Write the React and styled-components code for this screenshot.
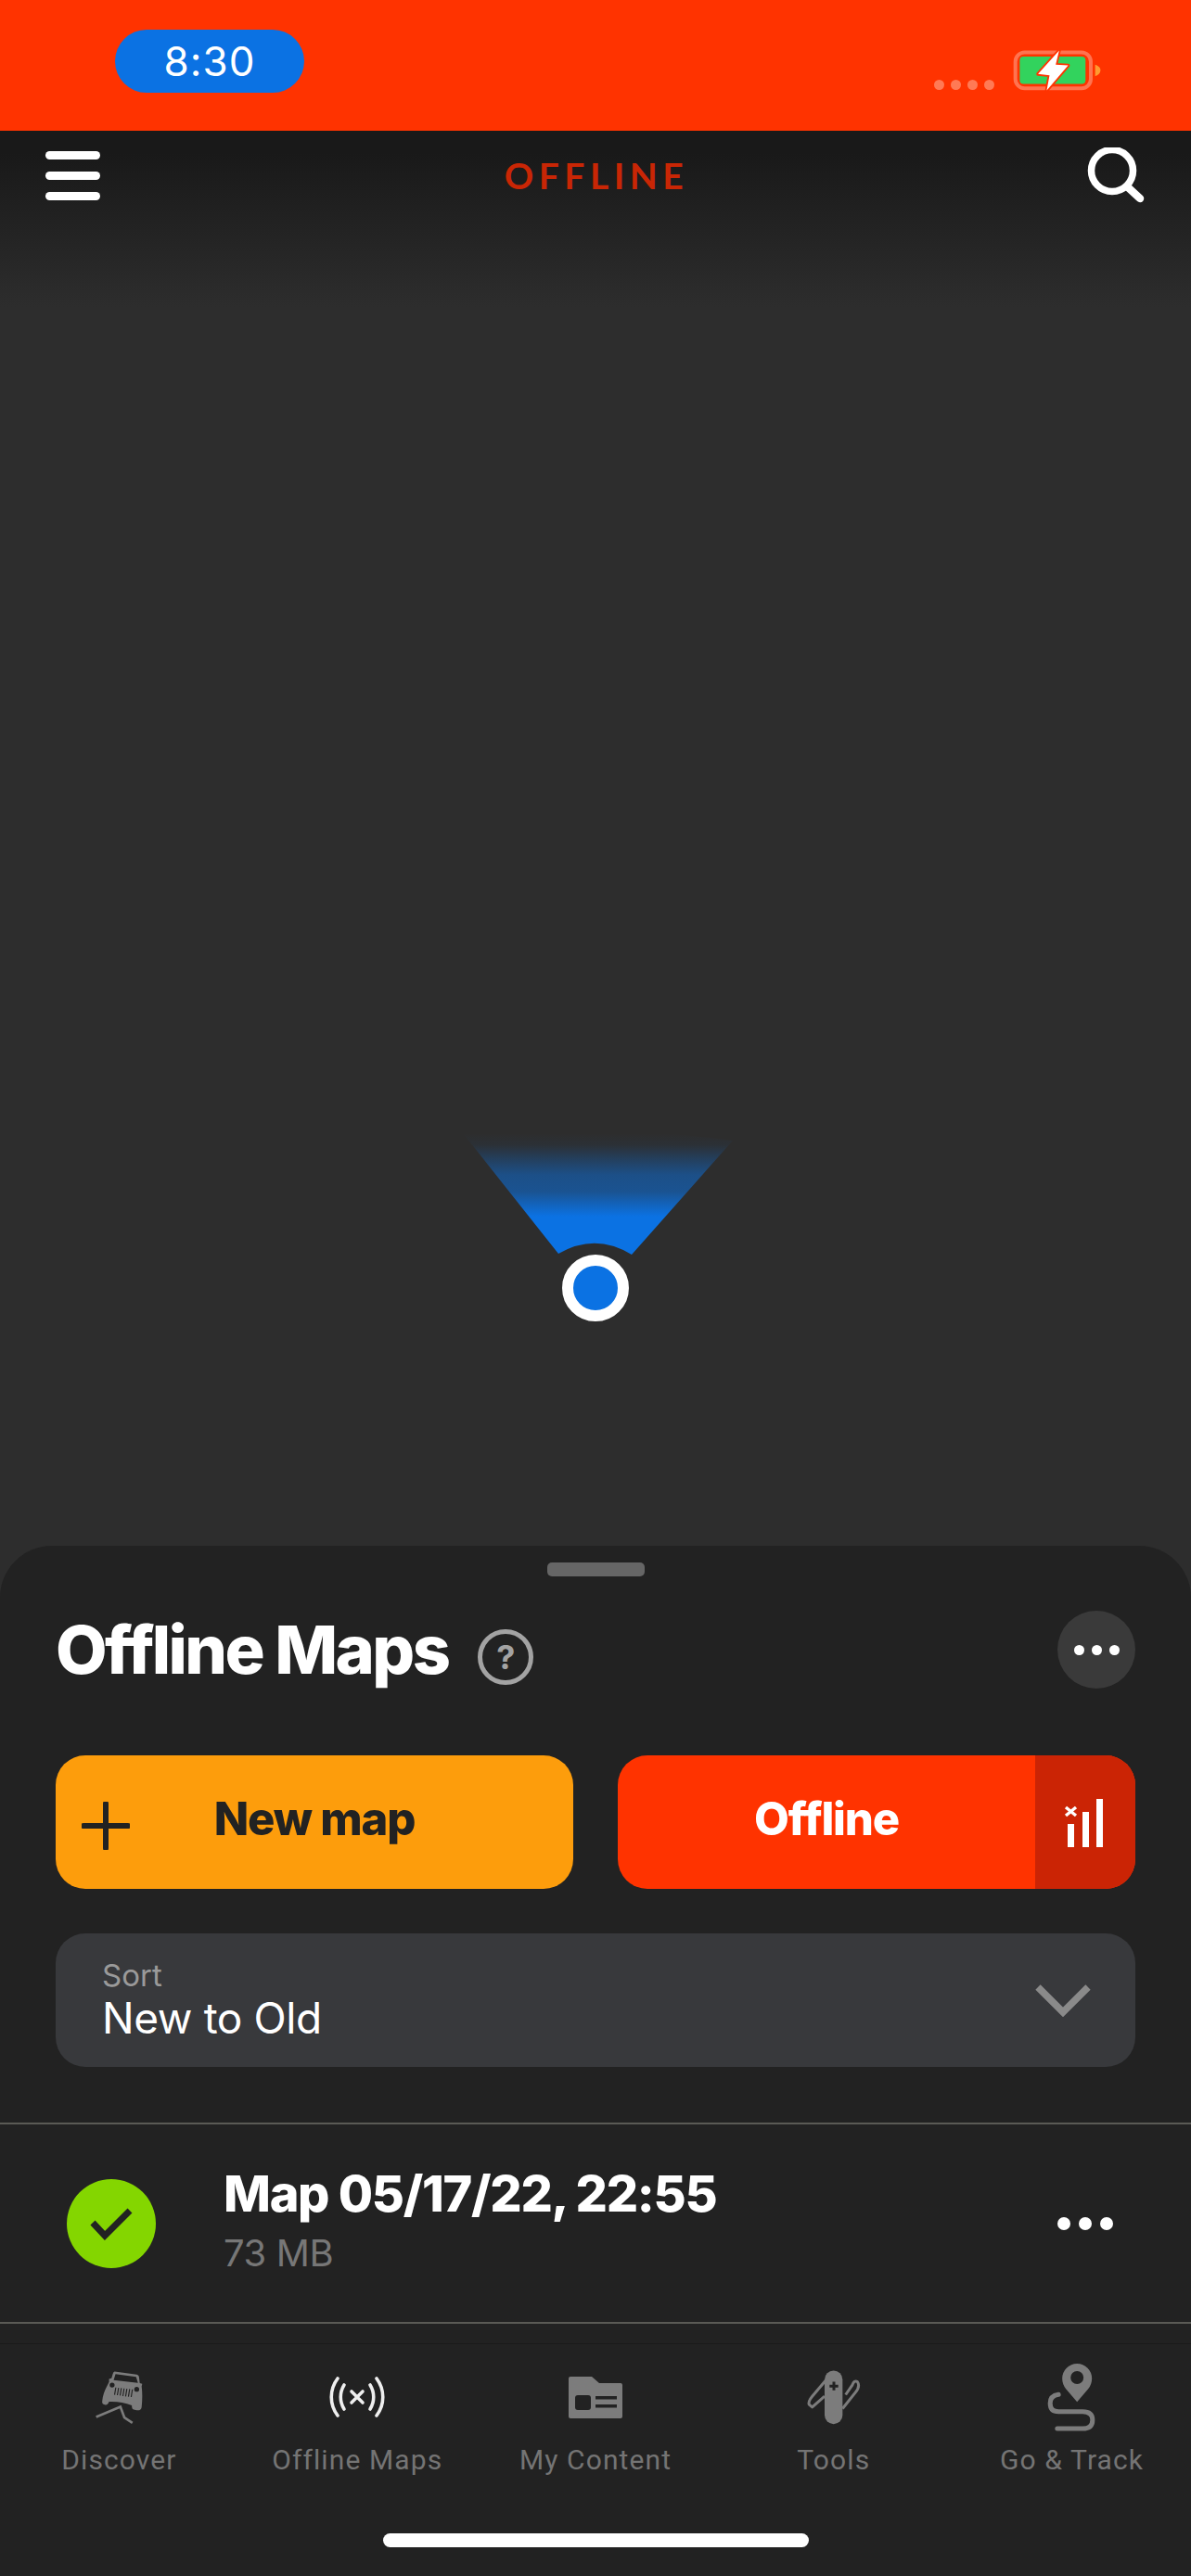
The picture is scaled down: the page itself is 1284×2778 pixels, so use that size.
import React from "react";
import styled, { createGlobalStyle } from "styled-components";

const Global = createGlobalStyle`
  html, body { margin: 0; padding: 0; background: #2d2d2d; }
  * { box-sizing: border-box; }
  body { font-family: Inter, Roboto, "Liberation Sans", sans-serif; }
`;

const Page = styled.div`
  width: 1284px;
  height: 2778px;
  display: flex;
  flex-direction: column;
  overflow: hidden;
  background: #2d2d2d;
`;

const StatusBar = styled.div`
  height: 141px;
  flex: none;
  background: #ff3300;
  display: flex;
  align-items: flex-start;
  justify-content: space-between;
  padding: 32px 96px 0 124px;
`;
const TimePill = styled.div`
  width: 204px;
  height: 68px;
  border-radius: 34px;
  background: #0b72e3;
  color: #fff;
  font: 400 44px/68px Inter, sans-serif;
  letter-spacing: 1px;
  text-align: center;
`;
const StatusRight = styled.div`
  display: flex;
  align-items: flex-end;
  gap: 19px;
  margin-top: 20px;
`;
const SignalDots = styled.div`
  display: flex;
  gap: 7px;
  margin-bottom: 2px;
`;
const SignalDot = styled.span`
  width: 11px;
  height: 11px;
  border-radius: 50%;
  background: #ff7a55;
`;

const MapArea = styled.div`
  position: relative;
  height: 1526px;
  flex: none;
  background: linear-gradient(#191919 0, #191919 24px, #2d2d2d 190px);
`;
const TopBar = styled.div`
  height: 96px;
  display: flex;
  align-items: center;
  justify-content: space-between;
  padding: 0 50px 0 49px;
`;
const Burger = styled.div`
  width: 59px;
  display: flex;
  flex-direction: column;
  gap: 13px;
`;
const BurgerBar = styled.span`
  height: 9px;
  border-radius: 5px;
  background: #fff;
`;
const ModeTitle = styled.div`
  font: 700 39px/1 Lato, sans-serif;
  letter-spacing: 5.5px;
  color: #c92605;
  margin-left: 6px;
`;
const Pin = styled.div`
  position: absolute;
  left: 499px;
  top: 1079px;
  width: 292px;
  height: 206px;
`;
const PinDot = styled.div`
  position: absolute;
  left: 107px;
  top: 133px;
  width: 72px;
  height: 72px;
  border-radius: 50%;
  background: #0b72e3;
  border: 12px solid #fff;
`;

const Sheet = styled.div`
  flex: 1;
  background: #222;
  border-radius: 56px 56px 0 0;
  display: flex;
  flex-direction: column;
`;
const Handle = styled.div`
  width: 105px;
  height: 15px;
  border-radius: 5px;
  background: #666;
  margin: 18px auto 0;
  flex: none;
`;
const Section = styled.div`
  padding: 0 60px;
`;
const TitleRow = styled(Section)`
  display: flex;
  align-items: center;
  margin-top: 37px;
  height: 84px;
`;
const Title = styled.h1`
  margin: 0;
  font: 800 72px/84px Inter, sans-serif;
  letter-spacing: -2.6px;
  color: #fff;
`;
const Help = styled.div`
  width: 60px;
  height: 60px;
  margin: 16px 0 0 32px;
  border-radius: 50%;
  border: 5px solid #a3a3a3;
  color: #a3a3a3;
  font: 700 36px/50px Inter, sans-serif;
  text-align: center;
`;
const MoreCircle = styled.div`
  width: 84px;
  height: 84px;
  margin-left: auto;
  border-radius: 50%;
  background: #3a3a3a;
  display: flex;
  align-items: center;
  justify-content: center;
  gap: 8px;
`;
const MoreDot = styled.span`
  width: ${(p) => p.$size}px;
  height: ${(p) => p.$size}px;
  border-radius: 50%;
  background: #fff;
`;
const ButtonRow = styled(Section)`
  display: grid;
  grid-template-columns: 558px 558px;
  justify-content: space-between;
  margin-top: 72px;
`;
const ActionButton = styled.div`
  height: 144px;
  border-radius: 32px;
  overflow: hidden;
  display: flex;
  align-items: stretch;
  background: ${(p) => p.$bg};
  color: ${(p) => p.$fg};
  font: 800 49px/1 Inter, sans-serif;
  letter-spacing: -1.2px;
`;
const PlusSlot = styled.div`
  width: 108px;
  flex: none;
  display: flex;
  align-items: center;
  justify-content: center;
  padding: 8px 0 0;
  margin-left: 0;
`;
const ButtonLabel = styled.div`
  flex: 1;
  display: flex;
  align-items: center;
  justify-content: center;
  padding: 0 ${(p) => p.$pad || 0}px 8px 0;
`;
const SignalSlot = styled.div`
  width: 108px;
  flex: none;
  background: #cb2405;
  display: flex;
  align-items: center;
  justify-content: center;
`;
const SortBox = styled.div`
  height: 144px;
  margin: 48px 60px 0;
  border-radius: 32px;
  background: #38393c;
  display: flex;
  align-items: center;
  justify-content: space-between;
  padding: 0 48px 0 50px;
`;
const SortText = styled.div`
  display: flex;
  flex-direction: column;
`;
const SortLabel = styled.div`
  font: 400 33px/38px Inter, sans-serif;
  color: #9a9a9a;
`;
const SortValue = styled.div`
  font: 400 46px/54px Inter, sans-serif;
  letter-spacing: -0.4px;
  color: #fff;
`;
const Divider = styled.div`
  height: 2px;
  flex: none;
  background: #5a5a55;
`;
const ListRow = styled.div`
  height: 213px;
  margin-top: ${(p) => p.$top || 0}px;
  display: flex;
  align-items: center;
  padding: 0 84px 0 72px;
`;
const StatusCircle = styled.div`
  width: 96px;
  height: 96px;
  flex: none;
  border-radius: 50%;
  background: #84d600;
  display: flex;
  align-items: center;
  justify-content: center;
`;
const RowText = styled.div`
  flex: 1;
  margin-left: 73px;
  padding-bottom: 4px;
`;
const RowTitle = styled.div`
  font: 800 54px/64px Inter, sans-serif;
  letter-spacing: -1.3px;
  color: #fff;
`;
const RowSub = styled.div`
  font: 400 40px/56px Inter, sans-serif;
  letter-spacing: -0.4px;
  color: #777;
  margin-top: 4px;
`;
const RowMore = styled.div`
  display: flex;
  gap: 9px;
`;
const TabArea = styled.div`
  flex: 1;
  display: flex;
  flex-direction: column;
  padding-top: 21px;
`;
const TabRule = styled.div`
  height: 1px;
  background: #1a1a1a;
`;
const Tabs = styled.div`
  display: grid;
  grid-template-columns: repeat(5, 1fr);
  padding-top: 21px;
`;
const Tab = styled.div`
  display: flex;
  flex-direction: column;
  align-items: center;
`;
const TabIcon = styled.div`
  height: 72px;
  display: flex;
  align-items: center;
  justify-content: center;
`;
const TabLabel = styled.div`
  margin-top: 12px;
  font: 400 30px/40px Roboto, sans-serif;
  letter-spacing: 1.1px;
  color: #747474;
  white-space: nowrap;
`;
const HomeBar = styled.div`
  width: 459px;
  height: 15px;
  border-radius: 8px;
  background: #fff;
  margin: 59px auto 0;
  flex: none;
`;

const GRAY = "#7c7c7c";
const DARK = "#222";

const BatteryIcon = () => (
  <svg width="97" height="47" viewBox="335 35 290 140">
    <rect x="346" y="48" width="243" height="116" rx="30" fill="none" stroke="#ff7350" strokeWidth="12" />
    <rect x="360" y="62" width="212" height="88" rx="12" fill="#32d35d" />
    <path d="M603 88 C615 92 622 100 620 108 C619 116 612 122 603 125 Z" fill="#ff9a30" />
    <path
      d="M487 42 L476 88 L516 90 L447 171 L456 122 L419 118 Z"
      fill="#fff"
      stroke="#ff3300"
      strokeWidth="11"
      strokeLinejoin="round"
      paintOrder="stroke"
    />
  </svg>
);

const SearchIcon = () => (
  <svg width="62" height="60" viewBox="0 0 62 60">
    <circle cx="27" cy="25" r="22.5" fill="none" stroke="#fff" strokeWidth="7.5" />
    <line x1="44" y1="43" x2="57" y2="55" stroke="#fff" strokeWidth="8.5" strokeLinecap="round" />
  </svg>
);

const ConeIcon = () => (
  <svg width="292" height="206" viewBox="499 1220 292 206">
    <defs>
      <linearGradient id="cone" gradientUnits="userSpaceOnUse" x1="0" y1="1222" x2="0" y2="1312">
        <stop offset="0" stopColor="#0b72e3" stopOpacity="0" />
        <stop offset="0.14" stopColor="#0b72e3" stopOpacity="0.05" />
        <stop offset="0.5" stopColor="#0b72e3" stopOpacity="0.5" />
        <stop offset="0.7" stopColor="#0b72e3" stopOpacity="0.55" />
        <stop offset="1" stopColor="#0b72e3" stopOpacity="1" />
      </linearGradient>
    </defs>
    <path d="M499 1222 Q640 1210 790 1230 L681 1353 Q642 1329 602 1352 Z" fill="url(#cone)" />
  </svg>
);

const PlusIcon = () => (
  <svg width="52" height="52" viewBox="0 0 52 52">
    <path d="M26 2 V50 M2 26 H50" stroke={DARK} strokeWidth="6" strokeLinecap="round" />
  </svg>
);

const SignalXIcon = () => (
  <svg width="46" height="54" viewBox="0 0 46 54">
    <rect x="4" y="29" width="7" height="25" fill="#fff" />
    <rect x="20" y="16" width="7" height="38" fill="#fff" />
    <rect x="35" y="2" width="7" height="52" fill="#fff" />
    <path d="M2 11 L13 20 M13 11 L2 20" stroke="#fff" strokeWidth="3.4" />
  </svg>
);

const ChevronIcon = () => (
  <svg width="60" height="36" viewBox="0 0 60 36">
    <path d="M3 4 L30 31 L57 4" fill="none" stroke="#8a8a8a" strokeWidth="7.5" />
  </svg>
);

const CheckIcon = () => (
  <svg width="48" height="36" viewBox="0 0 48 36">
    <path d="M4 17 L17 31 L44 4" fill="none" stroke={DARK} strokeWidth="7" />
  </svg>
);

const JeepIcon = () => (
  <svg width="53" height="60" viewBox="125 75 160 180">
    <path
      fill={GRAY}
      d="M190 82 L262 92 Q270 94 270 104 L272 120 L280 122 L278 130 Q282 160 278 198 Q276 210 262 208 L252 206 Q246 204 246 192 Q210 178 172 180 Q168 192 158 190 L152 188 Q148 186 150 176 Q152 154 166 128 L172 116 L172 106 L180 104 L184 90 Q186 82 190 82 Z"
    />
    <path fill={DARK} d="M193 90 L260 99 L266 119 L187 110 Z" />
    <circle cx="182" cy="126" r="8" fill={DARK} />
    <circle cx="262" cy="140" r="8" fill={DARK} />
    <path
      d="M194 134 L190 158 M203 135 L199 159 M212 136 L208 160 M221 137 L217 162 M230 138 L226 163 M239 139 L235 164 M248 140 L244 165"
      stroke={DARK}
      strokeWidth="3.5"
    />
    <path d="M130 230 L209 197 L222 232 L248 249" fill="none" stroke={GRAY} strokeWidth="8" />
  </svg>
);

const OfflineIcon = () => (
  <svg width="60" height="44" viewBox="0 0 60 44" fill="none" stroke="#efefef" strokeWidth="3.6" strokeLinecap="round">
    <path d="M9 2 C0 14 0 30 9 42" />
    <path d="M16 9 C11 17 11 27 16 35" />
    <path d="M51 2 C60 14 60 30 51 42" />
    <path d="M44 9 C49 17 49 27 44 35" />
    <path d="M24 16 L36 28 M36 16 L24 28" />
  </svg>
);

const FolderIcon = () => (
  <svg width="58" height="45" viewBox="0 0 58 45">
    <path
      fill={GRAY}
      d="M2 0 H25 L33 7 H56 Q58 7 58 9 V43 Q58 45 56 45 H2 Q0 45 0 43 V2 Q0 0 2 0 Z"
    />
    <rect x="7" y="20" width="17" height="16" rx="3" fill={DARK} />
    <rect x="29" y="21" width="23" height="3.5" fill={DARK} />
    <rect x="29" y="30" width="23" height="3.5" fill={DARK} />
  </svg>
);

const ToolsIcon = () => (
  <svg width="60" height="62" viewBox="140 75 180 185">
    <path
      d="M205 112 L160 165 Q146 182 150 192 L160 200 L200 165"
      fill="none"
      stroke={GRAY}
      strokeWidth="9"
      strokeLinejoin="round"
    />
    <path
      d="M258 205 L300 152 Q316 132 306 118 Q296 112 290 128 L268 160"
      fill="none"
      stroke={GRAY}
      strokeWidth="9"
      strokeLinejoin="round"
    />
    <rect x="200" y="82" width="58" height="173" rx="29" fill={GRAY} />
    <path d="M230 118 V146 M216 132 H244" stroke={DARK} strokeWidth="9" />
  </svg>
);

const RouteIcon = () => (
  <svg width="57" height="75" viewBox="920 55 170 225">
    <path
      fill={GRAY}
      fillRule="evenodd"
      d="M1022 182 L986 140 Q974 124 974 106 A48 48 0 0 1 1070 106 Q1070 124 1058 140 Z M1022 82 A21 21 0 1 0 1022.1 124 A21 21 0 1 0 1022 82 Z"
    />
    <path
      d="M962 158 Q935 162 935 186 Q935 213 962 213 H1040 Q1072 213 1072 240 Q1072 268 1040 268 H958"
      fill="none"
      stroke={GRAY}
      strokeWidth="15"
      strokeLinecap="round"
    />
  </svg>
);

const tabs = [
  { label: "Discover", Icon: JeepIcon },
  { label: "Offline Maps", Icon: OfflineIcon },
  { label: "My Content", Icon: FolderIcon },
  { label: "Tools", Icon: ToolsIcon },
  { label: "Go & Track", Icon: RouteIcon },
];

export default function App() {
  return (
    <Page>
      <Global />
      <StatusBar>
        <TimePill>8:30</TimePill>
        <StatusRight>
          <SignalDots>
            <SignalDot />
            <SignalDot />
            <SignalDot />
            <SignalDot />
          </SignalDots>
          <BatteryIcon />
        </StatusRight>
      </StatusBar>
      <MapArea>
        <TopBar>
          <Burger>
            <BurgerBar />
            <BurgerBar />
            <BurgerBar />
          </Burger>
          <ModeTitle>OFFLINE</ModeTitle>
          <SearchIcon />
        </TopBar>
        <Pin>
          <ConeIcon />
          <PinDot />
        </Pin>
      </MapArea>
      <Sheet>
        <Handle />
        <TitleRow>
          <Title>Offline Maps</Title>
          <Help>?</Help>
          <MoreCircle>
            <MoreDot $size={11} />
            <MoreDot $size={11} />
            <MoreDot $size={11} />
          </MoreCircle>
        </TitleRow>
        <ButtonRow>
          <ActionButton $bg="#fd9d0c" $fg="#222">
            <PlusSlot>
              <PlusIcon />
            </PlusSlot>
            <ButtonLabel $pad={108}>New map</ButtonLabel>
          </ActionButton>
          <ActionButton $bg="#ff3300" $fg="#fff">
            <ButtonLabel>Offline</ButtonLabel>
            <SignalSlot>
              <SignalXIcon />
            </SignalSlot>
          </ActionButton>
        </ButtonRow>
        <SortBox>
          <SortText>
            <SortLabel>Sort</SortLabel>
            <SortValue>New to Old</SortValue>
          </SortText>
          <ChevronIcon />
        </SortBox>
        <Divider style={{ marginTop: 60 }} />
        <ListRow>
          <StatusCircle>
            <CheckIcon />
          </StatusCircle>
          <RowText>
            <RowTitle>Map 05/17/22, 22:55</RowTitle>
            <RowSub>73 MB</RowSub>
          </RowText>
          <RowMore>
            <MoreDot $size={14} />
            <MoreDot $size={14} />
            <MoreDot $size={14} />
          </RowMore>
        </ListRow>
        <Divider />
        <TabArea>
          <TabRule />
          <Tabs>
            {tabs.map(({ label, Icon }) => (
              <Tab key={label}>
                <TabIcon>
                  <Icon />
                </TabIcon>
                <TabLabel>{label}</TabLabel>
              </Tab>
            ))}
          </Tabs>
          <HomeBar />
        </TabArea>
      </Sheet>
    </Page>
  );
}
